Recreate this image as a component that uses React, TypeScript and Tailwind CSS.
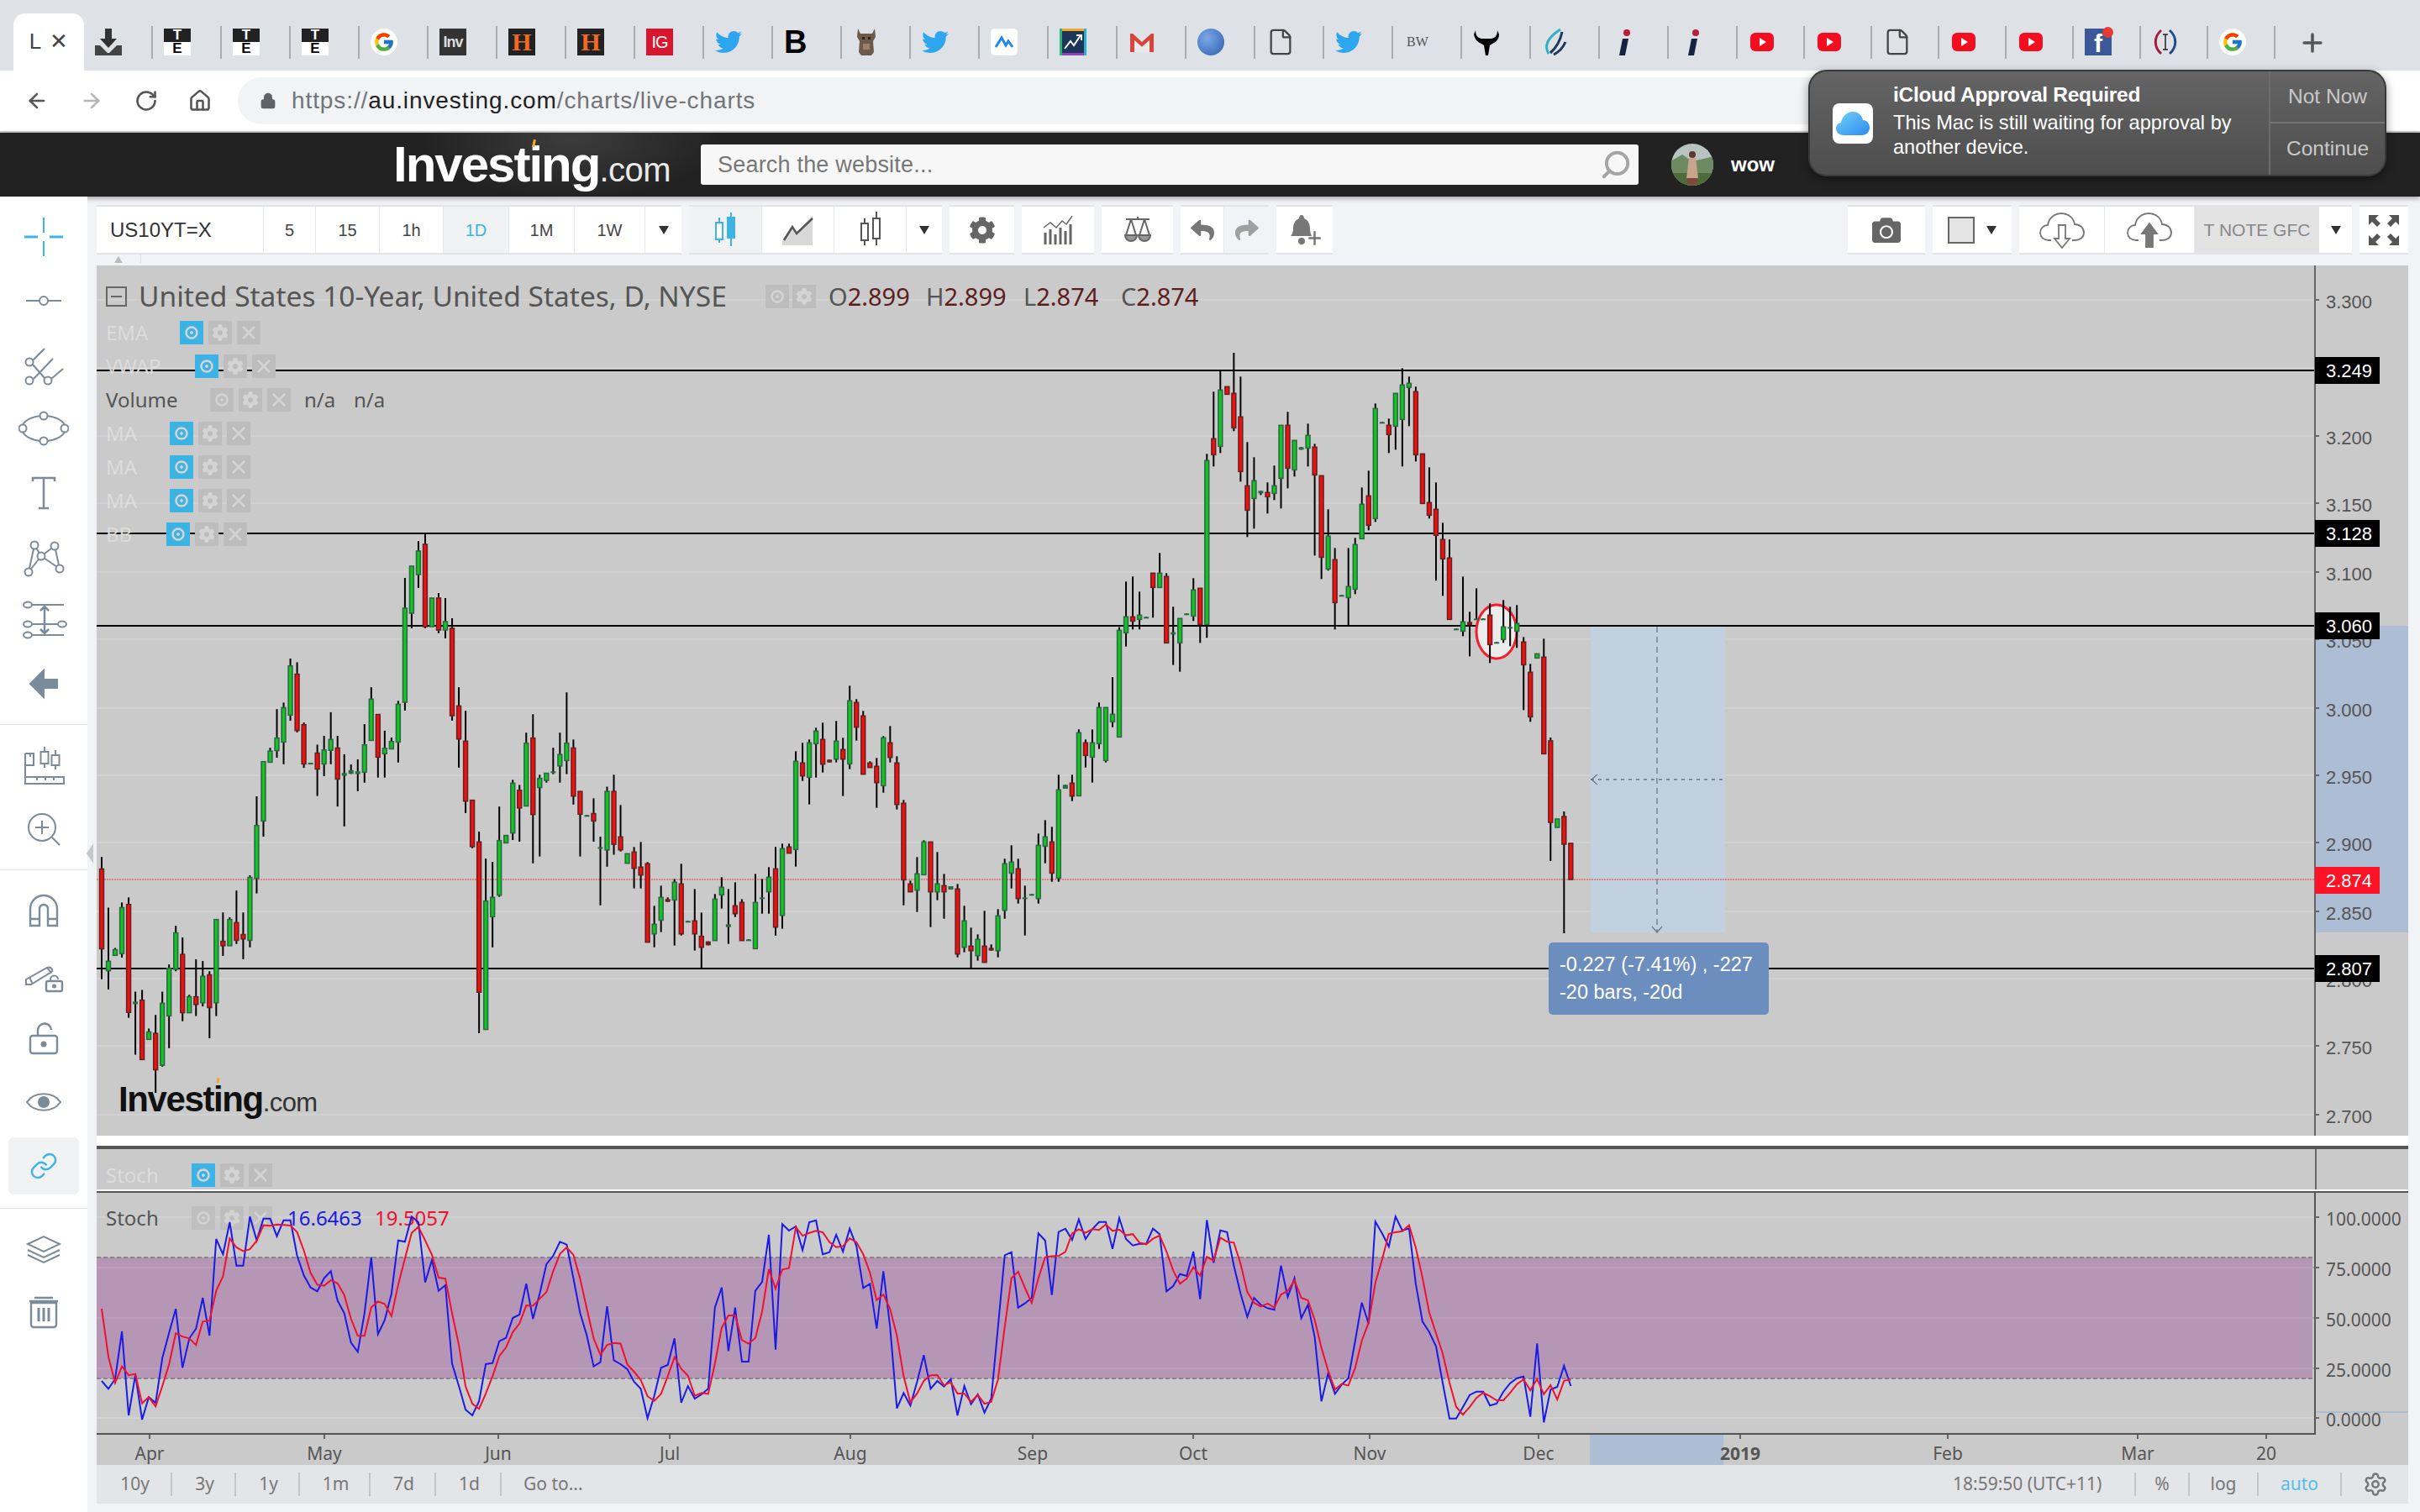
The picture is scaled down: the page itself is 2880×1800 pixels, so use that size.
import { FaCamera, FaCog, FaReply, FaShare, FaTwitter } from "react-icons/fa";
import { FcGoogle } from "react-icons/fc";
import { ArrowLeft, ArrowRight, File, Home, Link, Lock, Plus, RotateCw, Search, Settings } from "lucide-react";

// [top, bottom, high, low, green] of every candle, read from the picture in three scales
const conv = (rows: number[][], base: number, scale: number) =>
  rows.map((r) => [base + r[0] / scale, base + r[1] / scale, base + r[2] / scale, base + r[3] / scale, r[4]]);

const part1 = conv(
  [
    [812, 1093, 770, 1200, 0], [1137, 1170, 948, 1236, 1], [1096, 1116, 1090, 1116, 1], [948, 1110, 930, 1124, 1],
    [937, 1317, 912, 1336, 0], [1279, 1288, 1244, 1466, 1], [1274, 1483, 1238, 1483, 0], [1386, 1412, 1374, 1412, 1],
    [1391, 1519, 1326, 1600, 0], [1285, 1503, 1244, 1508, 1], [1162, 1329, 1148, 1443, 1], [1037, 1165, 1012, 1172, 1],
    [1113, 1318, 1053, 1348, 0], [1262, 1318, 1255, 1318, 1], [1262, 1289, 1130, 1330, 0], [1190, 1283, 1136, 1296, 1],
    [1185, 1300, 1172, 1408, 0], [990, 1283, 990, 1330, 1], [1067, 1082, 965, 1118, 0], [990, 1082, 982, 1082, 1],
    [1001, 1063, 888, 1076, 0], [1043, 1058, 965, 1130, 0], [842, 1063, 834, 1088, 1], [659, 845, 556, 898, 1],
    [434, 643, 434, 698, 1], [397, 436, 385, 436, 1], [351, 395, 249, 420, 1], [244, 365, 226, 443, 1],
    [97, 270, 71, 290, 1], [126, 324, 84, 331, 0], [304, 442, 296, 456, 0], [438, 442, 438, 442, 1],
    [404, 460, 374, 555, 0], [393, 442, 343, 485, 1], [356, 394, 260, 443, 1], [386, 495, 343, 592, 0],
    [474, 484, 408, 662, 1], [464, 477, 444, 477, 1], [468, 478, 426, 538, 1], [375, 471, 302, 508, 1],
    [214, 359, 172, 359, 1], [268, 418, 268, 490, 0], [387, 406, 325, 490, 1], [363, 389, 349, 389, 1],
    [232, 365, 220, 437, 1],
  ],
  760,
  2.958
);
const part2 = [
  [724, 836, 688, 846, 1], [674, 730, 674, 748, 1], [656, 684, 644, 700, 1], [648, 746, 635, 748, 0],
  [712, 746, 712, 746, 1], [712, 750, 706, 754, 0], [740, 750, 712, 760, 1], [748, 852, 736, 858, 0],
];
const part3 = conv(
  [
    [238, 354, 172, 455, 0], [362, 573, 255, 615, 0], [570, 733, 570, 739, 0], [717, 1246, 680, 1390, 0],
    [925, 1377, 775, 1377, 1], [912, 980, 787, 1088, 1], [712, 904, 592, 910, 1], [694, 720, 694, 720, 1],
    [510, 685, 498, 710, 1], [535, 597, 516, 716, 0], [369, 590, 332, 590, 1], [351, 620, 267, 792, 0],
    [493, 525, 480, 768, 1], [475, 500, 475, 508, 1], [468, 472, 385, 478, 1], [409, 449, 332, 508, 1],
    [369, 430, 190, 478, 1], [386, 555, 356, 585, 0], [539, 619, 539, 768, 0], [622, 626, 622, 626, 1],
    [617, 643, 563, 716, 0], [735, 739, 698, 940, 1], [539, 745, 522, 804, 1], [539, 725, 480, 762, 0],
  ],
  760,
  2.958
);
const part4 = conv(
  [
    [709, 755, 595, 761, 0], [769, 803, 769, 803, 1], [763, 821, 745, 893, 0], [817, 845, 727, 893, 0],
    [805, 1085, 799, 1085, 0], [1021, 1055, 955, 1103, 1], [925, 1006, 883, 1049, 1], [931, 941, 925, 941, 0],
    [871, 934, 859, 1097, 1], [877, 1055, 805, 1061, 0], [1009, 1013, 1009, 1013, 1], [1009, 1055, 895, 1115, 0],
    [1064, 1103, 979, 1178, 0], [1082, 1096, 1082, 1096, 0], [931, 1079, 913, 1079, 1], [889, 916, 853, 965, 1],
    [1021, 1031, 895, 1091, 1], [955, 983, 871, 995, 0], [943, 1079, 931, 1079, 0], [1075, 1079, 1075, 1079, 1],
    [943, 1108, 841, 1108, 1], [925, 929, 859, 983, 1], [853, 905, 817, 983, 1], [823, 1031, 745, 1061, 0],
    [751, 989, 733, 1037, 1], [745, 767, 733, 767, 0], [439, 754, 403, 815, 1], [445, 491, 373, 509, 0],
    [373, 496, 361, 593, 1], [331, 376, 319, 497, 1], [361, 449, 301, 479, 0], [433, 443, 433, 443, 0],
    [367, 431, 295, 443, 1], [397, 431, 355, 563, 0], [223, 448, 169, 467, 1], [229, 317, 217, 365, 0],
    [277, 485, 259, 485, 0], [445, 461, 439, 461, 0], [457, 515, 427, 605, 0], [355, 526, 349, 551, 1],
    [373, 425, 313, 443, 0], [445, 593, 421, 611, 0], [589, 862, 577, 953, 0], [877, 905, 865, 905, 0],
    [841, 899, 781, 977, 1], [727, 844, 721, 844, 1], [727, 905, 727, 1031, 0], [877, 905, 763, 935, 1],
    [883, 905, 841, 1001, 0], [885, 897, 885, 897, 1], [895, 1127, 877, 1139, 0], [1009, 1103, 955, 1121, 1],
    [1099, 1115, 1033, 1178, 0], [1075, 1133, 1057, 1151, 1], [1099, 1157, 973, 1157, 0], [1105, 1115, 1093, 1115, 0],
    [991, 1115, 967, 1139, 1], [805, 971, 787, 1001, 1], [799, 838, 739, 893, 1], [823, 929, 787, 947, 0],
    [925, 929, 883, 1061, 1], [913, 917, 913, 917, 1], [739, 929, 697, 947, 1], [709, 742, 649, 803, 1],
    [727, 838, 673, 869, 0], [541, 856, 487, 869, 1], [523, 537, 523, 537, 1], [517, 563, 487, 581, 0],
    [337, 562, 325, 562, 1], [373, 418, 361, 461, 0], [373, 424, 325, 515, 1], [247, 376, 229, 395, 1],
    [247, 436, 247, 443, 1], [271, 298, 139, 317, 1],
  ],
  760,
  3
);
const part5 = conv(
  [
    [1051, 1432, 1040, 1432, 1], [1003, 1060, 877, 1109, 1], [1003, 1018, 859, 1048, 0], [997, 1012, 913, 1048, 1],
    [1003, 1006, 1003, 1006, 1], [847, 898, 847, 1006, 0], [847, 898, 775, 898, 1], [859, 1096, 847, 1096, 0],
    [1058, 1066, 967, 1175, 1], [1009, 1096, 1009, 1199, 1], [991, 994, 991, 994, 1], [907, 1000, 865, 1018, 1],
    [901, 1030, 901, 1096, 0], [445, 1030, 421, 1078, 1], [367, 424, 199, 466, 0], [193, 394, 126, 418, 1],
    [181, 208, 181, 208, 0], [205, 328, 60, 340, 0], [289, 484, 145, 520, 0], [535, 622, 379, 718, 0],
    [517, 580, 433, 688, 1], [553, 562, 553, 568, 1], [559, 574, 523, 634, 0], [535, 562, 463, 586, 1],
    [319, 508, 319, 616, 1], [319, 472, 271, 544, 0], [373, 478, 373, 502, 1], [397, 406, 397, 406, 1],
    [355, 400, 313, 466, 1], [397, 496, 385, 784, 0], [499, 790, 499, 868, 0], [715, 832, 619, 838, 1],
    [799, 952, 757, 1048, 0], [925, 928, 925, 928, 1], [895, 934, 757, 1036, 1], [745, 904, 721, 922, 1],
    [601, 724, 541, 724, 1], [571, 676, 481, 694, 0], [259, 652, 241, 664, 1], [307, 310, 307, 310, 1],
    [319, 352, 295, 418, 0], [205, 322, 205, 406, 1], [175, 298, 115, 466, 1], [169, 184, 145, 322, 1],
    [199, 424, 181, 448, 0], [421, 598, 421, 598, 0], [595, 640, 469, 652, 0], [619, 712, 523, 874, 0],
    [727, 796, 667, 928, 0], [793, 1012, 727, 1012, 0], [1045, 1048, 1045, 1048, 1], [1021, 1054, 859, 1072, 1],
    [1021, 1033, 985, 1144, 0], [1009, 1012, 901, 1012, 1], [1009, 1012, 1009, 1012, 1], [997, 1102, 955, 1168, 0],
    [1093, 1096, 1093, 1096, 1], [1039, 1084, 943, 1096, 1], [1039, 1042, 967, 1108, 1], [1027, 1054, 961, 1114, 1],
    [1093, 1174, 1075, 1336, 0], [1201, 1360, 1171, 1378, 0], [1135, 1150, 1135, 1150, 1], [1147, 1492, 1081, 1492, 0],
  ],
  400,
  3
);
const part6 = [
  [882, 979, 878, 1025, 0], [975, 985, 975, 985, 1], [972, 1005, 966, 1111, 0], [1004, 1047, 1004, 1047, 0],
];
const candles = [...part1, ...part2, ...part3, ...part4, ...part5, ...part6];
const barX = (i: number) => 121 + 8.02 * i;

const kLeft = [
  912, 940, 905, 735, 1035, 890, 1050, 970, 990, 830, 740, 655, 865, 760, 725, 615, 750, 405, 460, 345, 500, 500, 325,
  410, 332, 332, 395, 338, 338, 465, 535, 578, 592, 545, 520, 625, 670, 775, 808, 670, 470, 745, 695, 600, 410, 415,
  325, 345, 560, 480, 590, 570, 850, 930, 1015, 1035, 985, 852, 848, 770, 758, 687, 675, 565, 690, 600, 495, 465, 415,
  425, 545, 670, 750, 860, 845, 645, 838, 852, 870, 915, 940, 1045, 965, 865, 855, 760, 990, 930, 975, 960, 940, 650,
  578, 805, 650, 843, 843, 590, 558, 390, 800, 352, 375, 360, 445, 345, 338, 460, 452, 390, 450, 368, 430, 580, 565,
  725, 520, 720, 1010, 955, 1000, 915, 820, 940,
];
const kRight = [
  672, 692, 665, 795, 690, 755, 720, 785, 735, 480, 223, 212, 410, 395, 375, 145, 170, 365, 140, 128, 168, 95, 165,
  130, 104, 104, 200, 90, 165, 188, 182, 182, 128, 148, 352, 333, 290, 297, 210, 380, 97, 250, 134, 140, 260, 360,
  443, 375, 400, 412, 418, 260, 372, 305, 448, 400, 515, 745, 645, 718, 685, 662, 530, 392, 468, 103, 145, 192, 85,
  135, 127, 325, 460, 497, 548, 680, 806, 806, 765, 722, 710, 710, 760, 753, 710, 680, 662, 656, 800, 538, 820, 703,
  693, 618, 690,
];
const stochK = [...kLeft.map((v) => 1340 + v / 3), ...kRight.map((v) => 1420 + v / 3)];
const stochD = stochK.map((_, i) =>
  i === 0 ? 1558 : i === 1 ? 1615 : (stochK[i] + stochK[i - 1] + stochK[i - 2]) / 3
);
const toPoints = (arr: number[]) => arr.map((y, i) => `${barX(i).toFixed(1)},${y.toFixed(1)}`).join(" ");

const priceTicks: [string, number][] = [
  ["3.300", 357], ["", 438], ["3.200", 519], ["3.150", 599], ["3.100", 681], ["3.050", 761], ["3.000", 843],
  ["2.950", 923], ["2.900", 1003], ["2.850", 1085], ["2.800", 1165], ["2.750", 1245], ["2.700", 1327],
];
const hLines: [string, number][] = [["3.249", 441], ["3.128", 635], ["3.060", 745], ["2.807", 1153]];
const stochTicks: [string, number][] = [
  ["100.0000", 1449], ["75.0000", 1509], ["50.0000", 1569], ["25.0000", 1629], ["0.0000", 1688],
];
const months: [string, number, boolean][] = [
  ["Apr", 178, false], ["May", 386, false], ["Jun", 593, false], ["Jul", 797, false], ["Aug", 1012, false],
  ["Sep", 1229, false], ["Oct", 1420, false], ["Nov", 1630, false], ["Dec", 1831, false], ["2019", 2071, true],
  ["Feb", 2318, false], ["Mar", 2544, false], ["20", 2697, false],
];

const tabs = [
  "down", "te", "te", "te", "g", "inv", "h", "h", "ig", "tw", "b", "bull", "tw", "wave", "arrow", "m", "globe", "doc",
  "tw", "bw", "horns", "swoosh", "i", "i", "yt", "yt", "doc", "yt", "yt", "f", "paren", "g",
];

function Favicon({ kind }: { kind: string }) {
  switch (kind) {
    case "down":
      return (
        <svg width="32" height="32" viewBox="0 0 32 32">
          <path d="M12 0h8v12h6L16 23 6 12h6z" fill="#333" />
          <path d="M0 20h6l9 9h2l9-9h6v12H0z" fill="#444" />
        </svg>
      );
    case "te":
      return (
        <div className="flex h-[32px] w-[32px] flex-col text-center font-bold leading-[16px]">
          <span className="h-[16px] bg-[#222] text-[17px] text-white">T</span>
          <span className="h-[16px] bg-white text-[17px] text-black">E</span>
        </div>
      );
    case "g":
      return (
        <div className="flex h-[32px] w-[32px] items-center justify-center rounded-full bg-white">
          <FcGoogle size={26} />
        </div>
      );
    case "inv":
      return (
        <div className="flex h-[32px] w-[32px] items-center justify-center bg-[#333] text-[18px] font-bold tracking-[-1px] text-[#ddd]">
          Inv
        </div>
      );
    case "h":
      return (
        <div className="flex h-[32px] w-[32px] items-center justify-center bg-[#222] font-['Liberation_Serif',serif] text-[30px] font-bold leading-none text-[#f26a21]">
          H
        </div>
      );
    case "ig":
      return (
        <div className="flex h-[32px] w-[32px] items-center justify-center bg-[#d8162d] text-[20px] tracking-tighter text-white">
          IG
        </div>
      );
    case "tw":
      return <FaTwitter size={32} color="#2da5ef" />;
    case "b":
      return <div className="h-[32px] w-[32px] text-[38px] font-bold leading-[32px] text-black">B</div>;
    case "bull":
      return (
        <svg width="32" height="32" viewBox="0 0 32 32">
          <path d="M6 0l3 6h14l3-6 1 10-3 5 1 13-3 4H10l-3-4 1-13-3-5z" fill="#6e5a48" />
          <path d="M11 10h3v3h-3zM18 10h3v3h-3z" fill="#2a2118" />
          <path d="M12 18h8v7h-8z" fill="#9a8268" />
        </svg>
      );
    case "wave":
      return (
        <div className="flex h-[32px] w-[32px] items-center justify-center rounded-[5px] bg-white">
          <svg width="24" height="24" viewBox="0 0 24 24" fill="none" stroke="#1e88f0" strokeWidth="3">
            <path d="M2 18L9 7l5 9 3-5 5 7" />
          </svg>
        </div>
      );
    case "arrow":
      return (
        <svg width="32" height="32" viewBox="0 0 32 32">
          <rect width="32" height="32" fill="#1d3557" />
          <rect width="32" height="3" fill="#f4a52a" />
          <rect y="29" width="32" height="3" fill="#8c44b8" />
          <rect width="3" height="32" fill="#2fb37c" />
          <rect x="29" width="3" height="32" fill="#2ab0d6" />
          <path d="M6 24l7-9 4 5 8-12M20 8h6v6" fill="none" stroke="#fff" strokeWidth="2" />
        </svg>
      );
    case "m":
      return (
        <svg width="32" height="32" viewBox="0 0 32 32">
          <path d="M2 6v22h5V14l9 8 9-8v14h5V6h-3L16 16 5 6z" fill="#d9453a" />
          <path d="M7 14l9 8 9-8v14H7z" fill="#e9e9e9" />
        </svg>
      );
    case "globe":
      return <div className="h-[32px] w-[32px] rounded-full bg-[radial-gradient(circle_at_35%_35%,#7aa7e8,#2f5fae)]" />;
    case "doc":
      return <File size={34} strokeWidth={1.6} color="#444" />;
    case "bw":
      return <div className="w-[32px] text-center font-['Liberation_Serif',serif] text-[16px] text-[#555]">BW</div>;
    case "horns":
      return (
        <svg width="32" height="32" viewBox="0 0 32 32">
          <path d="M3 2c0 7 3 9 7 10h12c4-1 7-3 7-10l2 5c0 5-3 9-8 11l-3 2-2 12h-3l-2-12-3-2C5 16 2 12 1 7z" fill="#000" />
        </svg>
      );
    case "swoosh":
      return (
        <svg width="32" height="32" viewBox="0 0 32 32" fill="none">
          <path d="M22 1C8 10 2 20 8 30" stroke="#2fb1c4" strokeWidth="3" />
          <path d="M24 4c-2 10-6 18-14 25" stroke="#1b3a5c" strokeWidth="3" />
          <path d="M28 16c-3 7-8 12-14 15" stroke="#1b3a5c" strokeWidth="3" />
        </svg>
      );
    case "i":
      return (
        <svg width="32" height="32" viewBox="0 0 32 32">
          <circle cx="19" cy="5" r="4" fill="#b71c3a" />
          <path d="M14 12h7l-4 20h-7z" fill="#14233f" />
        </svg>
      );
    case "yt":
      return (
        <svg width="32" height="32" viewBox="0 0 32 32">
          <rect x="2" y="5" width="28" height="22" rx="6" fill="#f40d1c" />
          <path d="M13 11l8 5-8 5z" fill="#fff" />
        </svg>
      );
    case "f":
      return (
        <div className="relative h-[32px] w-[32px] bg-[#3b5998] text-center text-[30px] font-bold leading-[36px] text-white">
          f<span className="absolute right-[-2px] top-[-2px] h-[13px] w-[13px] rounded-full bg-[#e53935]" />
        </div>
      );
    case "paren":
      return (
        <svg width="32" height="32" viewBox="0 0 32 32" fill="none" strokeWidth="3">
          <path d="M11 2C2 10 2 22 11 30" stroke="#a61c3c" />
          <path d="M21 2c9 8 9 20 0 28" stroke="#1f4e8c" />
          <path d="M16 7v18M13 7h6M13 25h6" stroke="#222" strokeWidth="1.5" />
        </svg>
      );
    default:
      return null;
  }
}

function TabStrip() {
  return (
    <div className="flex h-[84px] items-end bg-[#dee1e6] pl-[16px]">
      <div className="flex h-[68px] w-[84px] items-center justify-center gap-[10px] rounded-t-[14px] bg-white pb-[2px] text-[26px] text-[#444]">
        <span>L</span>
        <span>✕</span>
      </div>
      {tabs.map((t, i) => (
        <div key={i} className={i < 24 ? "flex h-[68px] w-[82px] items-start pt-[18px]" : "flex h-[68px] w-[80px] items-start pt-[18px]"}>
          <div className="flex h-[32px] flex-1 items-center pl-[13px]">
            <Favicon kind={t} />
          </div>
          <div className="mt-[-3px] h-[39px] w-[2px] bg-[#a9acb0]" />
        </div>
      ))}
      <div className="flex h-[68px] w-[88px] items-start justify-center pt-[18px]">
        <Plus size={34} strokeWidth={2.5} color="#555" />
      </div>
    </div>
  );
}

function AddressBar() {
  return (
    <div className="flex h-[74px] items-center gap-[37px] border-b-2 border-[#c8cacc] bg-white pl-[30px] pr-[80px]">
      <ArrowLeft size={28} strokeWidth={2.2} color="#555" />
      <ArrowRight size={28} strokeWidth={2.2} color="#b4b6b9" />
      <RotateCw size={28} strokeWidth={2.2} color="#555" />
      <Home size={28} strokeWidth={2.2} color="#555" className="ml-[-1px]" />
      <div className="ml-[-6px] flex h-[56px] flex-1 items-center gap-[18px] rounded-full bg-[#f1f3f4] pl-[26px] text-[28px] tracking-[0.9px]">
        <Lock size={20} fill="#5f6368" color="#5f6368" />
        <span className="text-[#70757a]">
          https://<span className="text-[#202124]">au.investing.com</span>/charts/live-charts
        </span>
      </div>
    </div>
  );
}

function Logo({ big, dark }: { big: string; dark: boolean }) {
  return (
    <div className={dark ? "flex items-baseline text-[#111]" : "flex items-baseline text-white"}>
      <span className={big === "lg" ? "relative text-[60px] font-bold tracking-[-2px]" : "relative text-[42px] font-bold tracking-[-1.4px]"}>
        Investing
        <span className={big === "lg" ? "absolute left-[166px] top-[8px] h-[9px] w-[3px] rotate-[12deg] bg-[#f5a623]" : "absolute left-[117px] top-[6px] h-[6px] w-[3px] rotate-[12deg] bg-[#f5a623]"} />
      </span>
      <span className={big === "lg" ? "text-[40px] tracking-[-0.5px] opacity-90" : "text-[31px] tracking-[-0.6px] text-[#333]"}>.com</span>
    </div>
  );
}

function Header() {
  return (
    <div className="flex h-[76px] items-center bg-[#222] bg-[radial-gradient(ellipse_180px_70px_at_680px_8px,#3c3c3c,#222)] pl-[468px] shadow-[0_2px_6px_rgba(0,0,0,0.35)]">
      <div className="h-[76px] w-[366px] leading-[76px]">
        <Logo big="lg" dark={false} />
      </div>
      <div className="flex h-[48px] w-[1116px] items-center justify-between rounded-[3px] bg-[#f7f7f7] pl-[20px] pr-[8px] text-[27px] tracking-[0.2px] text-[#777]">
        <span>Search the website...</span>
        <Search size={38} strokeWidth={2.5} color="#a5a5a5" className="scale-x-[-1]" />
      </div>
      <svg width="52" height="52" viewBox="0 0 52 52" className="ml-[38px]">
        <clipPath id="av">
          <circle cx="26" cy="26" r="25" />
        </clipPath>
        <g clipPath="url(#av)">
          <rect width="52" height="52" fill="#b9c4c2" />
          <path d="M0 22l14-8 12 8 26-6v36H0z" fill="#6d8a63" />
          <path d="M0 36h52v16H0z" fill="#4f6b3a" />
          <path d="M22 18h8l3 24h-14z" fill="#c9a48c" />
          <circle cx="26" cy="14" r="4" fill="#5a3a2c" />
          <path d="M20 42h12v8H20z" fill="#7a4a3a" />
        </g>
      </svg>
      <span className="ml-[20px] text-[24px] font-bold text-white">wow</span>
    </div>
  );
}

function IcloudPopup() {
  return (
    <div className="absolute left-[2152px] top-[83px] z-30 flex h-[127px] w-[688px] overflow-hidden rounded-[22px] border-2 border-[#3a3a3a] bg-gradient-to-b from-[#646464] to-[#4e4e4e] shadow-[0_4px_12px_rgba(0,0,0,0.4)]">
      <div className="flex w-[99px] items-center pl-[27px]">
        <div className="flex h-[48px] w-[48px] items-center justify-center rounded-[8px] bg-white">
          <svg width="40" height="28" viewBox="0 0 40 28">
            <defs>
              <linearGradient id="cl" x1="0" y1="0" x2="1" y2="1">
                <stop offset="0" stopColor="#6fd2f7" />
                <stop offset="1" stopColor="#2f8bf0" />
              </linearGradient>
            </defs>
            <path d="M9 28C3 28 0 24 0 20c0-4 3-7 6-7 1-6 6-13 14-13 7 0 11 5 12 10 5 0 8 4 8 9s-4 9-9 9z" fill="url(#cl)" />
          </svg>
        </div>
      </div>
      <div className="w-[447px] pt-[12px] text-white">
        <div className="text-[24.5px] font-bold leading-[32px] tracking-[-0.3px]">iCloud Approval Required</div>
        <div className="mt-[3px] text-[23.6px] leading-[29px]">
          This Mac is still waiting for approval by
          <br />
          another device.
        </div>
      </div>
      <div className="flex flex-1 flex-col border-l-2 border-[#6c6c6c] text-center text-[24.5px] text-[#c9c9c9]">
        <div className="flex h-[62px] items-center justify-center border-b-2 border-[#747474]">Not Now</div>
        <div className="flex flex-1 items-center justify-center">Continue</div>
      </div>
    </div>
  );
}

const SIDE = "#7b8b9a";

function SideIcon({ children }: { children: React.ReactNode }) {
  return (
    <div className="flex h-[76px] items-center justify-center">
      <svg width="60" height="60" viewBox="0 0 60 60" fill="none" stroke={SIDE} strokeWidth="2">
        {children}
      </svg>
    </div>
  );
}

function Sidebar() {
  return (
    <div className="flex w-[104px] flex-col bg-white pt-[10px]">
      <SideIcon>
        <path d="M30 7v18M30 35v18" stroke="#3eb3e5" />
        <path d="M7 30h16M37 30h16" stroke="#3eb3e5" strokeWidth="3" />
      </SideIcon>
      <SideIcon>
        <path d="M9 30h16M35 30h16" />
        <circle cx="30" cy="30" r="5" />
      </SideIcon>
      <SideIcon>
        <circle cx="13" cy="27" r="4.5" />
        <circle cx="13" cy="49" r="4.5" />
        <circle cx="35" cy="49" r="4.5" />
        <path d="M17 25l14-14M17 30l14 16M18 47l23-24M39 47l14-12" />
      </SideIcon>
      <SideIcon>
        <ellipse cx="30" cy="30" rx="26" ry="15" />
        <circle cx="30" cy="15" r="4.5" fill="#fff" />
        <circle cx="30" cy="45" r="4.5" fill="#fff" />
        <circle cx="5" cy="30" r="4.5" fill="#fff" />
        <circle cx="55" cy="30" r="4.5" fill="#fff" />
      </SideIcon>
      <SideIcon>
        <path d="M30 13v36M24 49h12M17 17v-4h26v4" strokeWidth="2.5" />
      </SideIcon>
      <SideIcon>
        <path d="M12 49l7-32 8 13 16-12 6 27-22-15z" />
        <circle cx="19" cy="17" r="4.5" fill="#fff" />
        <circle cx="43" cy="18" r="4.5" fill="#fff" />
        <circle cx="27" cy="30" r="4.5" fill="#fff" />
        <circle cx="12" cy="49" r="4.5" fill="#fff" />
        <circle cx="49" cy="45" r="4.5" fill="#fff" />
      </SideIcon>
      <SideIcon>
        <path d="M6 12h48M6 35h48M6 48h48" />
        <path d="M31 14v32M26 19l5-5 5 5M26 41l5 5 5-5" strokeWidth="2.5" />
        <ellipse cx="11" cy="12" rx="5" ry="3.5" fill="#fff" />
        <ellipse cx="11" cy="35" rx="5" ry="3.5" fill="#fff" />
        <ellipse cx="11" cy="48" rx="5" ry="3.5" fill="#fff" />
        <ellipse cx="52" cy="35" rx="5" ry="3.5" fill="#fff" />
      </SideIcon>
      <SideIcon>
        <path d="M14 30l16-16v11h16v10H30v11z" fill={SIDE} />
      </SideIcon>
      <div className="my-[10px] h-[1px] bg-[#e1e5ea]" />
      <SideIcon>
        <path d="M8 16v36h46v-8H8M14 16v4M8 16h10v14H8M22 44v4M32 44v4M42 44v4" />
        <path d="M31 8v6M31 28v5M44 12v6M44 30v5" />
        <rect x="26.5" y="14" width="9" height="14" />
        <rect x="39.5" y="18" width="9" height="12" />
      </SideIcon>
      <SideIcon>
        <circle cx="28" cy="28" r="16" />
        <path d="M40 40l9 9M20 28h16M28 20v16" />
      </SideIcon>
      <div className="my-[10px] h-[1px] bg-[#e1e5ea]" />
      <SideIcon>
        <path d="M14 48V28a16 16 0 0 1 32 0v20h-11V28a5 5 0 0 0-10 0v20zM14 40h11M35 40h11" strokeWidth="2.4" />
      </SideIcon>
      <SideIcon>
        <path d="M9 36l25-14c3-1 5 0 6 2s0 3-2 4L15 42H9zM13 33l4 9M34 22l5 6" />
        <rect x="33" y="38" width="19" height="12" rx="2" strokeWidth="2.4" />
        <path d="M38 38v-2a4.5 4.5 0 0 1 9 0" />
        <circle cx="42.5" cy="44" r="1.5" fill={SIDE} />
      </SideIcon>
      <SideIcon>
        <rect x="14" y="27" width="32" height="21" rx="3" strokeWidth="2.4" />
        <path d="M23 27v-6a8 8 0 0 1 16-1" strokeWidth="2.4" />
        <circle cx="30" cy="37" r="2.5" fill={SIDE} />
      </SideIcon>
      <SideIcon>
        <path d="M10 30c9-13 31-13 40 0-9 13-31 13-40 0z" />
        <circle cx="30" cy="30" r="6" fill={SIDE} />
      </SideIcon>
      <div className="mx-[10px] mt-[4px] flex h-[68px] items-center justify-center rounded-[6px] bg-[#f1f2f4]">
        <Link size={34} color="#3eb3e5" strokeWidth={1.7} />
      </div>
      <div className="mt-[16px] h-[1px] bg-[#e1e5ea]" />
      <div className="mt-[10px]">
        <SideIcon>
          <path d="M11 24l19-9 19 9-19 9z" />
          <path d="M11 31l19 9 19-9M11 37l19 9 19-9" />
        </SideIcon>
        <SideIcon>
          <path d="M15 18h30v26a3 3 0 0 1-3 3H18a3 3 0 0 1-3-3zM13 16h34M19 12h22" strokeWidth="2.4" />
          <path d="M24 24v16M30 24v16M36 24v16" strokeWidth="3" />
        </SideIcon>
      </div>
    </div>
  );
}

function Cell({ w, children, active }: { w: string; children: React.ReactNode; active?: boolean }) {
  return (
    <div className={`flex ${w} items-center justify-center border-r border-[#e6e8eb] last:border-r-0 ${active ? "bg-[#f1f2f4]" : ""}`}>
      {children}
    </div>
  );
}

const Group = ({ children }: { children: React.ReactNode }) => (
  <div className="flex h-[59px] border-y-2 border-[#e2e4e8] bg-white text-[20px] text-[#444]">{children}</div>
);

const Caret = () => <div className="h-0 w-0 border-x-[6px] border-t-[10px] border-x-transparent border-t-[#333]" />;

function Toolbar() {
  return (
    <>
      <div className="flex h-[69px] items-start gap-[9px] pt-[10px]">
        <Group>
          <Cell w="w-[199px]">
            <span className="w-full pl-[16px] text-[24px] text-[#333]">US10YT=X</span>
          </Cell>
          <Cell w="w-[62px]">5</Cell>
          <Cell w="w-[76px]">15</Cell>
          <Cell w="w-[76px]">1h</Cell>
          <Cell w="w-[78px]" active>
            <span className="text-[#3eb3e5]">1D</span>
          </Cell>
          <Cell w="w-[78px]">1M</Cell>
          <Cell w="w-[84px]">1W</Cell>
          <Cell w="w-[43px]">
            <Caret />
          </Cell>
        </Group>
        <Group>
          <Cell w="w-[87px]" active>
            <svg width="32" height="42" viewBox="0 0 32 42" fill="none" stroke="#3eb3e5" strokeWidth="2">
              <path d="M9 6v30M23 0v40" />
              <rect x="5" y="12" width="8" height="20" fill="#fff" />
              <rect x="19" y="6" width="8" height="24" fill="#3eb3e5" />
            </svg>
          </Cell>
          <Cell w="w-[86px]">
            <svg width="38" height="36" viewBox="0 0 38 36">
              <path d="M0 30l10-16 6 8L36 0v36H0z" fill="#d8d8d8" />
              <path d="M2 30l10-16 5 8L36 4" fill="none" stroke="#555" strokeWidth="2.5" />
            </svg>
          </Cell>
          <Cell w="w-[86px]">
            <svg width="28" height="44" viewBox="0 0 28 44" fill="none" stroke="#555" strokeWidth="2">
              <path d="M7 8v32M21 0v40" />
              <rect x="3" y="14" width="8" height="20" fill="#fff" />
              <rect x="17" y="8" width="8" height="24" fill="#fff" />
            </svg>
          </Cell>
          <Cell w="w-[42px]">
            <Caret />
          </Cell>
        </Group>
        <Group>
          <Cell w="w-[77px]">
            <FaCog size={32} color="#666" />
          </Cell>
        </Group>
        <Group>
          <Cell w="w-[86px]">
            <svg width="36" height="34" viewBox="0 0 36 34" fill="none" stroke="#666">
              <path d="M3 34V20M9 34V16M15 34V22M21 34V14M27 34V18M33 34V10" strokeWidth="3" />
              <path d="M1 14l8-6 7 6 7-8 5 4 7-10" strokeWidth="1.5" />
            </svg>
          </Cell>
        </Group>
        <Group>
          <Cell w="w-[85px]">
            <svg width="34" height="36" viewBox="0 0 34 36" fill="none" stroke="#666" strokeWidth="2">
              <path d="M3 5h28M17 2v4M9 5L3 24M9 5l6 19M25 5l-6 19M25 5l6 19" />
              <path d="M2 24a7 7 0 0 0 14 0zM18 24a7 7 0 0 0 14 0z" fill="#999" />
            </svg>
          </Cell>
        </Group>
        <Group>
          <Cell w="w-[52px]">
            <FaReply size={28} color="#777" />
          </Cell>
          <div className="flex w-[53px] items-center justify-center bg-[#f1f3f6]">
            <FaShare size={28} color="#a0a0a0" />
          </div>
        </Group>
        <Group>
          <Cell w="w-[67px]">
            <svg width="38" height="36" viewBox="0 0 38 36" fill="#777">
              <path d="M15 0c2 0 3 2 3 4 5 2 7 7 7 12 0 4 1 7 2 9H2c2-2 3-5 3-9 0-5 2-10 7-12 0-2 1-4 3-4z" />
              <circle cx="15" cy="31" r="4" />
              <path d="M29 19h3v7h6v3h-6v7h-3v-7h-6v-3h6z" stroke="#fff" strokeWidth="0.5" />
            </svg>
          </Cell>
        </Group>
        <div className="ml-auto flex gap-[9px]">
          <Group>
            <Cell w="w-[92px]">
              <FaCamera size={34} color="#666" />
            </Cell>
          </Group>
          <Group>
            <Cell w="w-[94px]">
              <div className="mr-[14px] h-[32px] w-[32px] border-2 border-[#666] bg-[#e4e4e4]" />
              <Caret />
            </Cell>
          </Group>
          <Group>
            <Cell w="w-[102px]">
              <CloudIcon up={false} />
            </Cell>
            <Cell w="w-[107px]">
              <CloudIcon up />
            </Cell>
            <div className="flex w-[148px] items-center justify-center bg-[#e3e3e3] text-[21px] text-[#888]">T NOTE GFC</div>
            <Cell w="w-[39px]">
              <Caret />
            </Cell>
          </Group>
          <Group>
            <Cell w="w-[58px]">
              <svg width="36" height="36" viewBox="0 0 36 36" fill="#555">
                <path d="M0 0h12l-4 4 6 6-4 4-6-6-4 4zM36 0v12l-4-4-6 6-4-4 6-6-4-4zM0 36V24l4 4 6-6 4 4-6 6 4 4zM36 36H24l4-4-6-6 4-4 6 6 4-4z" />
              </svg>
            </Cell>
          </Group>
        </div>
      </div>
      <div className="flex h-[13px] items-start">
        <div className="flex h-[10px] w-[53px] items-center justify-center border-r border-[#dfe1e5] pt-[1px]">
          <div className="h-0 w-0 border-x-[5px] border-b-[8px] border-x-transparent border-b-[#bbb]" />
        </div>
      </div>
    </>
  );
}

function CloudIcon({ up }: { up: boolean }) {
  return (
    <svg width="54" height="44" viewBox="0 0 54 44" fill="none" stroke="#777" strokeWidth="1.8">
      <path d="M14 34H11C5 34 1 30 1 25s4-9 9-9c1-8 8-14 16-14 9 0 15 6 16 13 6 0 11 4 11 10s-5 9-11 9h-3" />
      {up ? (
        <path d="M27 14L18 26h5v16h8V26h5z" fill="#777" />
      ) : (
        <path d="M23 16h8v16h5l-9 11-9-11h5z" fill="#fff" />
      )}
    </svg>
  );
}

function LegendBtn({ kind, on }: { kind: "eye" | "gear" | "x"; on?: boolean }) {
  return (
    <div className={`flex h-[28px] w-[28px] items-center justify-center ${on ? "bg-[#3cb3e5]" : "bg-[#bdbdbd]"}`}>
      {kind === "eye" && (
        <svg width="18" height="18" viewBox="0 0 18 18" fill="none" stroke="#d4d4d4" strokeWidth="2.5">
          <circle cx="9" cy="9" r="6.5" />
          <circle cx="9" cy="9" r="1.5" fill="#d4d4d4" strokeWidth="1" />
        </svg>
      )}
      {kind === "gear" && <FaCog size={20} color="#d4d4d4" />}
      {kind === "x" && (
        <svg width="18" height="18" viewBox="0 0 18 18" stroke="#d4d4d4" strokeWidth="2.5">
          <path d="M2 2l14 14M16 2L2 16" />
        </svg>
      )}
    </div>
  );
}

const LegendBtns = ({ on }: { on: boolean }) => (
  <div className="flex gap-[6px]">
    <LegendBtn kind="eye" on={on} />
    <LegendBtn kind="gear" />
    <LegendBtn kind="x" />
  </div>
);

function Legend() {
  return (
    <div className="absolute left-[11px] top-[19px] font-['Noto_Sans',sans-serif] text-[24px]">
      <div className="flex h-[36px] items-center text-[#555]">
        <div className="flex h-[24px] w-[25px] items-center justify-center border-2 border-[#666]">
          <div className="h-[2px] w-[13px] bg-[#666]" />
        </div>
        <div className="ml-[14px] w-[746px] text-[33.5px] leading-none">United States 10-Year, United States, D, NYSE</div>
        <div className="flex gap-[4px]">
          <LegendBtn kind="eye" />
          <LegendBtn kind="gear" />
        </div>
        <div className="ml-[15px] flex text-[29px]">
          {[
            ["O", "2.899"],
            ["H", "2.899"],
            ["L", "2.874"],
            ["C", "2.874"],
          ].map(([k, v]) => (
            <div key={k} className="w-[116px]">
              {k}
              <span className="text-[#5c1d1d]">{v}</span>
            </div>
          ))}
        </div>
      </div>
      <div className="mt-[5px]">
        <div className="flex h-[40px] items-center">
          <span className="w-[88px] text-[#dcdcdc]">EMA</span>
          <LegendBtns on />
        </div>
        <div className="flex h-[40px] items-center">
          <span className="w-[106px] text-[#dcdcdc]">VWAP</span>
          <LegendBtns on />
        </div>
        <div className="flex h-[40px] items-center">
          <span className="w-[124px] text-[#555]">Volume</span>
          <LegendBtns on={false} />
          <span className="ml-[16px] w-[59px] text-[#555]">n/a</span>
          <span className="text-[#555]">n/a</span>
        </div>
        {["MA", "MA", "MA"].map((m, i) => (
          <div key={i} className="flex h-[40px] items-center">
            <span className="w-[76px] text-[#dcdcdc]">{m}</span>
            <LegendBtns on />
          </div>
        ))}
        <div className="flex h-[40px] items-center">
          <span className="w-[72px] text-[#dcdcdc]">BB</span>
          <LegendBtns on />
        </div>
      </div>
    </div>
  );
}

function PriceChart() {
  return (
    <div className="relative h-[1036px] bg-[#cacaca]">
      <svg width="2751" height="1036" viewBox="115 316 2751 1036" className="block font-['Liberation_Sans',sans-serif]">
        <rect x="2756" y="745" width="110" height="365" fill="#adbdd4" />
        {priceTicks.map(([, y]) => (
          <rect key={y} x="115" y={y - 1} width="2640" height="2" fill="#d1d1d1" />
        ))}
        <rect x="1893" y="746" width="160" height="364" fill="#c2d1e0" />
        <path d="M1972 746V1110" stroke="#7c8896" strokeWidth="1.6" strokeDasharray="7 5" />
        <path d="M1893 928H2053" stroke="#6c7682" strokeWidth="1.6" strokeDasharray="4 5" />
        <path d="M1901 922l-7 6 7 6M1966 1103l6 7 6-7" fill="none" stroke="#6c7682" strokeWidth="1.2" />
        {hLines.map(([, y]) => (
          <rect key={y} x="115" y={y - 1} width="2640" height="2" fill="#000" />
        ))}
        <path d="M115 1047H2755" stroke="#e26a6a" strokeWidth="1.5" strokeDasharray="2 1" />
        <ellipse cx="1781" cy="752" rx="24" ry="32" fill="#ececec" stroke="#f51c2c" strokeWidth="3" />
        {candles.map((c, i) => {
          const x = barX(i);
          const green = c[4] === 1;
          const h = Math.max(c[1] - c[0], 1.5);
          return (
            <g key={i}>
              <path d={`M${x} ${c[2]}V${c[3]}`} stroke="#000" strokeWidth="2" />
              {h < 5 ? (
                <rect x={x - 3} y={c[0]} width="6" height={Math.max(h, 2)} fill={green ? "#2a6a45" : "#6b2020"} />
              ) : (
                <rect x={x - 2.4} y={c[0]} width="4.8" height={h} fill={green ? "#14c41f" : "#f01010"} stroke={green ? "#2a6a45" : "#6b2020"} strokeWidth="1.6" />
              )}
            </g>
          );
        })}
        <path d="M2755 316V1352" stroke="#666" strokeWidth="2" />
        {priceTicks.map(([t, y]) => (
          <g key={y}>
            <path d={`M2755 ${y}h5`} stroke="#666" strokeWidth="2" />
            {t && (
              <text x="2768" y={y + 10} className="fill-[#555] text-[22px]">
                {t}
              </text>
            )}
          </g>
        ))}
        {hLines.map(([t, y]) => (
          <g key={t}>
            <rect x="2755" y={y - 16} width="77" height="32" fill="#000" />
            <text x="2768" y={y + 8} className="fill-white text-[22px]">
              {t}
            </text>
          </g>
        ))}
        <rect x="2755" y="1032" width="77" height="32" fill="#fd1325" />
        <text x="2768" y="1056" className="fill-white text-[22px]">
          2.874
        </text>
      </svg>
      <Legend />
      <div className="absolute left-[1728px] top-[806px] flex h-[86px] w-[262px] flex-col justify-center rounded-[5px] bg-[#6b8ebf] pl-[13px] text-[23.5px] leading-[33px] text-white">
        <span>-0.227 (-7.41%) , -227</span>
        <span>-20 bars, -20d</span>
      </div>
      <div className="absolute left-[26px] top-[961px]">
        <Logo big="sm" dark />
      </div>
      <div className="absolute left-[-12px] top-[688px] h-0 w-0 border-y-[12px] border-r-[8px] border-y-transparent border-r-[#c4c8cc]" />
    </div>
  );
}

function StochChart() {
  return (
    <>
      <div className="relative h-[48px] bg-[#cacaca]">
        <div className="absolute left-[11px] top-[13px] flex items-center font-['Noto_Sans',sans-serif] text-[24px] text-[#dcdcdc]">
          <span className="w-[102px]">Stoch</span>
          <LegendBtns on />
        </div>
        <div className="absolute bottom-0 left-[2640px] top-0 w-[2px] bg-[#666]" />
      </div>
      <div className="h-[2px] bg-white" />
      <div className="h-[2px] bg-[#555]" />
      <div className="relative h-[324px] bg-[#cacaca]">
        {/* grid sits under the legend, the two lines run over it */}
        <svg width="2751" height="324" viewBox="115 1420 2751 324" className="absolute left-0 top-0">
          <rect x="115" y="1497" width="2637" height="144" fill="#b597b5" />
          {stochTicks.map(([, y]) => (
            <rect key={y} x="115" y={y - 1} width="2640" height="2" fill={y > 1497 && y < 1641 ? "#bd9fbd" : "#d1d1d1"} />
          ))}
          <path d="M115 1497H2752M115 1641H2752" stroke="#8d858d" strokeWidth="2" strokeDasharray="5 3" />
        </svg>
        <div className="absolute left-[11px] top-[12px] flex items-center font-['Noto_Sans',sans-serif] text-[24px] text-[#555]">
          <span className="w-[102px]">Stoch</span>
          <div className="opacity-80">
            <LegendBtns on={false} />
          </div>
          <span className="ml-[18px] w-[104px] text-[#1a1ae6]">16.6463</span>
          <span className="text-[#f01030]">19.5057</span>
        </div>
        <svg width="2751" height="324" viewBox="115 1420 2751 324" className="relative block font-['Noto_Sans',sans-serif]">
          <polyline points={toPoints(stochK)} fill="none" stroke="#1a1ae6" strokeWidth="2" />
          <polyline points={toPoints(stochD)} fill="none" stroke="#f01030" strokeWidth="2" />
          <rect x="1892" y="1708" width="159" height="36" fill="#adbdd4" />
          <rect x="2756" y="1680" width="110" height="2" fill="#adbdd4" />
          <path d="M115 1707H2755M2755 1420V1708" stroke="#555" strokeWidth="2" />
          {stochTicks.map(([t, y]) => (
            <g key={t}>
              <path d={`M2755 ${y}h5`} stroke="#666" strokeWidth="2" />
              <text x="2768" y={y + 10} className="fill-[#555] text-[21px]">
                {t}
              </text>
            </g>
          ))}
          {months.map(([m, x, bold]) => (
            <g key={m}>
              <path d={`M${x} 1708v5`} stroke="#666" strokeWidth="2" />
              <text x={x} y="1738" textAnchor="middle" className={bold ? "fill-[#555] text-[21px] font-bold" : "fill-[#555] text-[21px]"}>
                {m}
              </text>
            </g>
          ))}
        </svg>
      </div>
    </>
  );
}

function BottomBar() {
  const left = [
    ["10y", "w-[90px]"],
    ["3y", "w-[76px]"],
    ["1y", "w-[76px]"],
    ["1m", "w-[84px]"],
    ["7d", "w-[78px]"],
    ["1d", "w-[78px]"],
  ];
  return (
    <div className="flex h-[46px] items-center bg-[#e4e5e8] font-['Noto_Sans',sans-serif] text-[21px] text-[#777]">
      {left.map(([t, w]) => (
        <div key={t} className={`flex h-[28px] ${w} items-center justify-center border-r-2 border-[#c4c5c8] pl-[3px]`}>
          {t}
        </div>
      ))}
      <span className="ml-[26px]">Go to...</span>
      <div className="ml-auto flex items-center">
        <span className="w-[216px] text-[#777]">18:59:50 (UTC+11)</span>
        <div className="flex h-[28px] w-[66px] items-center justify-center border-x-2 border-[#c4c5c8]">%</div>
        <div className="flex h-[28px] w-[82px] items-center justify-center border-r-2 border-[#c4c5c8]">log</div>
        <div className="flex h-[28px] w-[99px] items-center justify-center border-r-2 border-[#c4c5c8] text-[#52bfe6]">auto</div>
        <div className="flex w-[79px] items-center justify-center">
          <Settings size={30} color="#777" strokeWidth={2} />
        </div>
      </div>
    </div>
  );
}

export default function App() {
  return (
    <div className="relative flex h-[1800px] w-[2880px] flex-col overflow-hidden bg-[#f1f3f6] font-['Liberation_Sans',Arial,sans-serif]">
      <TabStrip />
      <AddressBar />
      <Header />
      <IcloudPopup />
      <div className="flex flex-1">
        <Sidebar />
        <div className="ml-[11px] w-[2751px]">
          <Toolbar />
          <PriceChart />
          <div className="h-[12px] bg-white" />
          <div className="h-[4px] bg-[#555]" />
          <StochChart />
          <BottomBar />
        </div>
      </div>
    </div>
  );
}
